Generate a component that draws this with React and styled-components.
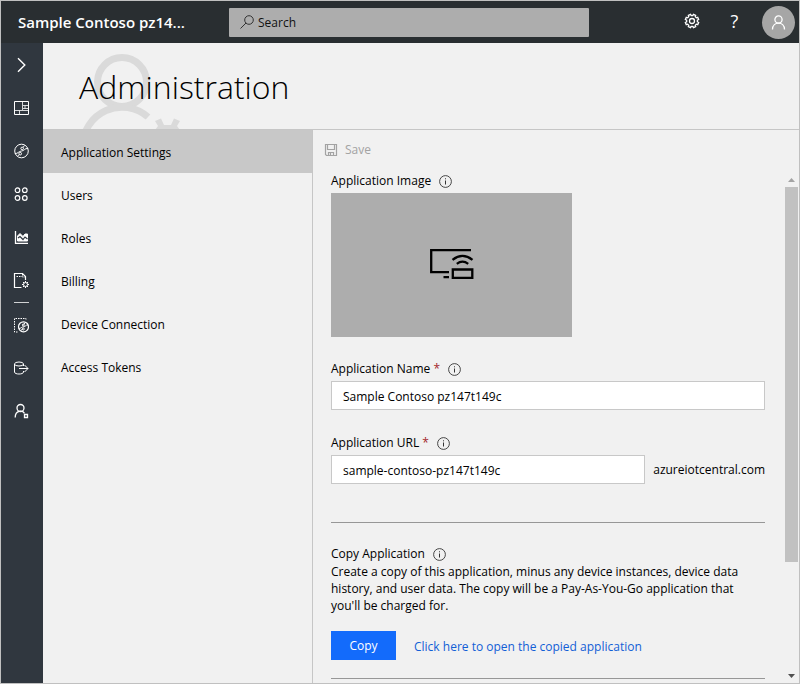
import React from "react";
import styled, { createGlobalStyle, css } from "styled-components";

const GlobalStyle = createGlobalStyle`
  *, *::before, *::after { box-sizing: border-box; }
  body {
    margin: 0;
    background: #f1f1f1;
    color: #000;
    font-family: "Open Sans", "Noto Sans", sans-serif;
    font-size: 12px;
    line-height: 18px;
  }
  button, input { font: inherit; color: inherit; }
  svg { display: block; flex: none; }
`;

const Page = styled.div`
  min-height: 100vh;
  display: flex;
  flex-direction: column;
  border: 1px solid #c0c0c0;
`;

const TopBar = styled.header`
  display: flex;
  align-items: center;
  height: 42px;
  padding-right: 4px;
  background: #292e31;
  color: #fff;
`;

const Brand = styled.div`
  flex: none;
  width: 228px;
  padding-left: 17px;
  font-size: 15px;
  font-weight: 600;
  line-height: 24px;
`;

const SearchBox = styled.label`
  display: flex;
  align-items: center;
  gap: 4px;
  flex: 0 1 360px;
  height: 29px;
  padding-left: 11px;
  border-radius: 1px;
  background: #adadad;
  color: #000;
`;

const SearchInput = styled.input`
  flex: 1;
  min-width: 0;
  padding: 1px 0 0;
  border: 0;
  background: transparent;
  outline: 0;
  &::placeholder { color: #111; opacity: 1; }
`;

const TopActions = styled.div`
  display: flex;
  align-items: center;
  margin-left: auto;
`;

const TopButton = styled.button`
  display: flex;
  align-items: center;
  justify-content: center;
  width: 43px;
  height: 42px;
  padding: 0 0 2px;
  border: 0;
  background: transparent;
  font-size: 18px;
`;

const Avatar = styled.button`
  display: flex;
  align-items: center;
  justify-content: center;
  width: 33px;
  height: 33px;
  margin-left: 6px;
  padding: 0;
  border: 0;
  border-radius: 50%;
  background: #a6a6a6;
`;

const Body = styled.div`
  flex: 1;
  display: flex;
`;

const Rail = styled.nav`
  flex: none;
  width: 42px;
  background: #30373f;
  color: #fff;
`;

const RailButton = styled.button`
  display: flex;
  align-items: center;
  justify-content: center;
  width: 100%;
  height: 43px;
  padding: 0 2px 0 0;
  border: 0;
  background: transparent;
`;

const RailDivider = styled.hr`
  width: 15px;
  height: 1px;
  margin: 1px 0 0 13px;
  border: 0;
  background: #d0d2d4;
`;

const Main = styled.main`
  flex: 1;
  min-width: 0;
  display: flex;
  flex-direction: column;
`;

const PageHeader = styled.div`
  position: relative;
  height: 87px;
  padding: 22px 0 0 36px;
  border-bottom: 1px solid #c6c6c6;
  overflow: hidden;
`;

const HeaderArt = styled.svg`
  position: absolute;
  top: 0;
  left: 36px;
`;

const Title = styled.h1`
  position: relative;
  margin: 0;
  font-size: 32px;
  font-weight: 300;
  line-height: 44px;
`;

const Columns = styled.div`
  flex: 1;
  display: flex;
`;

const SideMenu = styled.nav`
  flex: none;
  width: 270px;
  border-right: 1px solid #c6c6c6;
`;

const MenuLink = styled.a`
  display: flex;
  align-items: center;
  height: 43px;
  padding: 2px 0 0 18px;
  color: #000;
  text-decoration: none;
  ${(p) => p.$active && css`background: #c8c8c8;`}
`;

const Panel = styled.section`
  flex: 1;
  min-width: 0;
  display: flex;
  flex-direction: column;
`;

const Toolbar = styled.div`
  display: flex;
  align-items: center;
  height: 42px;
  padding: 0 0 2px 11px;
`;

const SaveButton = styled.button`
  display: flex;
  align-items: center;
  gap: 7px;
  padding: 0;
  border: 0;
  background: transparent;
  color: #a3a3a3;
`;

const ScrollArea = styled.div`
  flex: 1;
  display: flex;
`;

const Form = styled.form`
  flex: 1;
  min-width: 0;
  padding: 0 20px 4px 18px;
`;

const Field = styled.div`
  margin-top: ${(p) => p.$gap || 0}px;
`;

const LabelRow = styled.div`
  display: flex;
  align-items: center;
  gap: 8px;
  height: 18px;
  margin-bottom: ${(p) => (p.$tight ? 0 : 3)}px;
`;

const Required = styled.span`
  color: #a4262c;
`;

const ImagePicker = styled.button`
  display: flex;
  align-items: center;
  justify-content: center;
  width: 241px;
  height: 144px;
  padding: 0 0 2px;
  border: 0;
  background: #adadad;
`;

const TextInput = styled.input`
  flex: 1;
  width: 100%;
  min-width: 0;
  height: 29px;
  padding: 1px 11px 0;
  border: 1px solid #c8c8c8;
  background: #fff;
  outline: 0;
`;

const InputRow = styled.div`
  display: flex;
  align-items: center;
  gap: 8px;
`;

const Rule = styled.hr`
  height: 1px;
  margin: ${(p) => p.$space} 0 0;
  border: 0;
  background: #979797;
`;

const Description = styled.p`
  margin: 0 0 17px;
  line-height: 17px;
`;

const ActionRow = styled.div`
  display: flex;
  align-items: center;
  gap: 18px;
`;

const PrimaryButton = styled.button`
  width: 65px;
  height: 29px;
  padding: 0;
  border: 0;
  background: #136bfb;
  color: #fff;
`;

const TextLink = styled.a`
  padding-top: 2px;
  color: #1160d6;
  text-decoration: none;
`;

const ScrollBar = styled.div`
  flex: none;
  display: flex;
  flex-direction: column;
  width: 14px;
  padding-right: 1px;
  background: #f1f1f1;
`;

const ScrollArrow = styled.button`
  display: flex;
  align-items: center;
  justify-content: center;
  height: 15px;
  padding: 0;
  border: 0;
  background: transparent;
`;

const ScrollTrack = styled.div`
  flex: 1;
  display: flex;
  flex-direction: column;
`;

const ScrollThumb = styled.div`
  height: 78%;
  background: #c1c1c1;
`;

const Icon = ({ size = 16, width = 1, children }) => (
  <svg
    width={size}
    height={size}
    viewBox={`0 0 ${size} ${size}`}
    fill="none"
    stroke="currentColor"
    strokeWidth={width}
    aria-hidden="true"
  >
    {children}
  </svg>
);

const gearPath = (cx, cy, outer, inner) => {
  const points = [];
  for (let i = 0; i < 8; i += 1) {
    [[-0.25, inner], [-0.18, outer], [0.18, outer], [0.25, inner]].forEach(([d, r]) => {
      const a = (i * Math.PI) / 4 + Math.PI / 8 + d;
      points.push(`${(cx + r * Math.cos(a)).toFixed(2)} ${(cy + r * Math.sin(a)).toFixed(2)}`);
    });
  }
  return `M${points.join("L")}Z`;
};

const InfoIcon = () => (
  <svg width="13" height="13" viewBox="0 0 13 13" fill="none" stroke="#333" role="img" aria-label="Information">
    <circle cx="6.5" cy="6.5" r="5.9" strokeWidth="0.9" />
    <path d="M6.5 5.5V9.5M6.5 3.3V4.3" />
  </svg>
);

const railItems = [
  { label: "Expand", icon: <Icon width={1.4}><path d="M5 1.2 11.8 8 5 14.8" /></Icon> },
  {
    label: "Dashboard",
    icon: (
      <Icon>
        <path d="M1.5 1.5H15.5V14.5H1.5Z" />
        <path d="M9.5 2V10M2 10.5H15M10 5.5H15M6.5 10.5V14M12 5.5V8.5M10 8.5H15" strokeOpacity="0.8" />
      </Icon>
    ),
  },
  {
    label: "Devices",
    icon: (
      <Icon>
        <circle cx="8.5" cy="8" r="6.8" />
        <path d="M2 10.5C5 11 5.5 8 8.5 8S11.5 5 15 5.5" />
        <path d="M4.8 13 6.2 11.5M10 4.5 11.5 2.5" />
        <circle cx="9.2" cy="5.4" r="1.3" />
        <circle cx="7.2" cy="10.7" r="1.3" />
      </Icon>
    ),
  },
  {
    label: "Device groups",
    icon: (
      <Icon width={1.2}>
        <circle cx="4.5" cy="4.2" r="2.3" />
        <circle cx="11.8" cy="4.2" r="2.3" />
        <circle cx="4.5" cy="12" r="2.3" />
        <circle cx="11.8" cy="12" r="2.3" />
      </Icon>
    ),
  },
  {
    label: "Analytics",
    icon: (
      <Icon>
        <path d="M2.5 2V14.3H15" strokeWidth="1.3" />
        <path d="M4.5 12V7L7 4.5 10 7.500 12 5H14.5V12Z" fill="currentColor" />
        <path d="M5 9 7 7.500 10 10.500 12 8 14.500 10" stroke="#30373f" strokeWidth="1.2" />
      </Icon>
    ),
  },
  {
    label: "Jobs",
    icon: (
      <Icon>
        <path d="M8.5 15.5H1.500V1.500H9.500L12.500 4.500V8" strokeWidth="1.200" />
        <path d="M3.500 4.500H9M9.500 2V5H12" strokeDasharray="1.500 1" />
        <circle cx="12.500" cy="12.500" r="2" />
        <path d="M12.500 9V10.500M12.500 14.500V16M9 12.500H10.500M14.500 12.500H16M10 10 11 11M14 14 15 15M15 10 14 11M11 14 10 15" />
      </Icon>
    ),
  },
  {
    label: "Device templates",
    dividerBefore: true,
    icon: (
      <Icon>
        <path d="M4.500 15H1.500V1.500H13V3.500" strokeDasharray="1.500 1" />
        <circle cx="10.500" cy="9.800" r="5" strokeWidth="1.200" />
        <path d="M5.800 11.500C8.300 11.500 8.300 9.800 10.500 9.800S12.800 7.500 15 8M7.800 13.800 9.300 12M12.300 5.500 10.800 7.500" />
        <circle cx="10.300" cy="8" r="1" />
        <circle cx="10.300" cy="12" r="1" />
      </Icon>
    ),
  },
  {
    label: "Data export",
    icon: (
      <Icon>
        <path d="M1.500 4V12C1.500 14.700 10.500 14.700 10.500 12V11M10.500 6V4" />
        <ellipse cx="6" cy="4" rx="4.500" ry="2" />
        <path d="M6 8.500H15M11.500 5 15 8.500 11.500 12" />
      </Icon>
    ),
  },
  {
    label: "Administration",
    icon: (
      <Icon width={1.3}>
        <circle cx="7.500" cy="5" r="3.500" />
        <path d="M2.200 14.500C2.200 7 9.500 7 11.500 10.300" />
        <path d="M11.500 11.500H14.500V14.500H11.500Z" />
      </Icon>
    ),
  },
];

const menuItems = ["Application Settings", "Users", "Roles", "Billing", "Device Connection", "Access Tokens"];

export default function App() {
  return (
    <Page>
      <GlobalStyle />
      <TopBar>
        <Brand>Sample Contoso pz14...</Brand>
        <SearchBox>
          <Icon size={14}>
            <circle cx="9" cy="5" r="4.3" stroke="#333" />
            <path d="M6 8 0.5 13.5" stroke="#333" />
          </Icon>
          <SearchInput type="text" placeholder="Search" aria-label="Search" />
        </SearchBox>
        <TopActions>
          <TopButton aria-label="Settings">
            <Icon width={1.3}>
              <path d={gearPath(8, 8, 6.8, 5.4)} />
              <circle cx="8" cy="8" r="2.5" />
            </Icon>
          </TopButton>
          <TopButton aria-label="Help">?</TopButton>
          <Avatar aria-label="Account">
            <Icon size={15} width={1.3}>
              <circle cx="7.5" cy="4.5" r="3.6" />
              <path d="M1.5 14.5C1.5 6 13.5 6 13.5 14.5" />
            </Icon>
          </Avatar>
        </TopActions>
      </TopBar>
      <Body>
        <Rail aria-label="Main">
          {railItems.map((item) => (
            <React.Fragment key={item.label}>
              {item.dividerBefore && <RailDivider />}
              <RailButton aria-label={item.label}>{item.icon}</RailButton>
            </React.Fragment>
          ))}
        </Rail>
        <Main>
          <PageHeader>
            <HeaderArt width="110" height="86" viewBox="0 0 110 86" fill="none" stroke="#dadada" strokeWidth="7" aria-hidden="true">
              <circle cx="43" cy="39" r="24.5" />
              <path d="M3.7 103A39.3 39.3 0 0 1 69 74" />
              <path d="M76 78 82 75.5 85 82H92L95 75.5 101 78 98 83 101 87H76L79 83Z" fill="#dadada" stroke="none" />
            </HeaderArt>
            <Title>Administration</Title>
          </PageHeader>
          <Columns>
            <SideMenu aria-label="Administration">
              {menuItems.map((name, i) => (
                <MenuLink key={name} href="#" $active={i === 0} aria-current={i === 0 ? "page" : undefined}>
                  {name}
                </MenuLink>
              ))}
            </SideMenu>
            <Panel>
              <Toolbar>
                <SaveButton type="button" disabled>
                  <Icon size={14} width={1.2}>
                    <path d="M1.5 1.5H12.5V12.5H2.5L1.5 11.5ZM3.5 2V6.5H10.5V2M4.5 12V9.5H9.5V12M6.5 10V12" />
                  </Icon>
                  Save
                </SaveButton>
              </Toolbar>
              <ScrollArea>
                <Form>
                  <Field>
                    <LabelRow>
                      <span>Application Image</span>
                      <InfoIcon />
                    </LabelRow>
                    <ImagePicker type="button" aria-label="Application Image">
                      <svg width="44" height="30" viewBox="0 0 44 30" fill="none" stroke="#000" strokeWidth="2.3" aria-hidden="true">
                        <path d="M41 1.2H1.2V23.2H19M13.500 28.200H19" />
                        <path d="M22.800 20.500H42.300V28.800H22.800Z" />
                        <path d="M22.500 10.800Q32.500 3 42.500 10.800M26.800 14.800Q32.500 10.500 38.200 14.800" />
                      </svg>
                    </ImagePicker>
                  </Field>
                  <Field $gap={23}>
                    <LabelRow>
                      <label htmlFor="app-name">
                        Application Name <Required>*</Required>
                      </label>
                      <InfoIcon />
                    </LabelRow>
                    <InputRow>
                      <TextInput id="app-name" type="text" defaultValue="Sample Contoso pz147t149c" />
                    </InputRow>
                  </Field>
                  <Field $gap={24}>
                    <LabelRow>
                      <label htmlFor="app-url">
                        Application URL <Required>*</Required>
                      </label>
                      <InfoIcon />
                    </LabelRow>
                    <InputRow>
                      <TextInput id="app-url" type="text" defaultValue="sample-contoso-pz147t149c" />
                      <span>azureiotcentral.com</span>
                    </InputRow>
                  </Field>
                  <Rule $space="38px" />
                  <Field $gap={22}>
                    <LabelRow $tight>
                      <span>Copy Application</span>
                      <InfoIcon />
                    </LabelRow>
                    <Description>
                      Create a copy of this application, minus any device instances, device data history, and user data.
                      The copy will be a Pay-As-You-Go application that you'll be charged for.
                    </Description>
                    <ActionRow>
                      <PrimaryButton type="button">Copy</PrimaryButton>
                      <TextLink href="#">Click here to open the copied application</TextLink>
                    </ActionRow>
                  </Field>
                  <Rule $space="18px" />
                </Form>
                <ScrollBar>
                  <ScrollArrow type="button" aria-label="Scroll up">
                    <svg width="7" height="4" viewBox="0 0 7 4" fill="#a3a3a3"><path d="M0 4 3.5 0 7 4Z" /></svg>
                  </ScrollArrow>
                  <ScrollTrack>
                    <ScrollThumb />
                  </ScrollTrack>
                  <ScrollArrow type="button" aria-label="Scroll down">
                    <svg width="7" height="4" viewBox="0 0 7 4" fill="#505050"><path d="M0 0H7L3.5 4Z" /></svg>
                  </ScrollArrow>
                </ScrollBar>
              </ScrollArea>
            </Panel>
          </Columns>
        </Main>
      </Body>
    </Page>
  );
}
